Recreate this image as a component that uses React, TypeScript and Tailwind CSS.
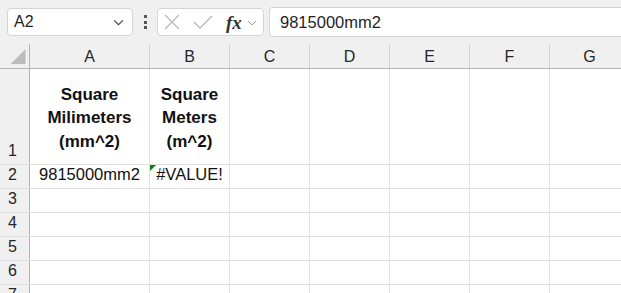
import React from 'react'

const cols = [
  { key: 'A', w: 'w-[120px]' },
  { key: 'B', w: 'w-[80px]' },
  { key: 'C', w: 'w-[80px]' },
  { key: 'D', w: 'w-[80px]' },
  { key: 'E', w: 'w-[80px]' },
  { key: 'F', w: 'w-[80px]' },
  { key: 'G', w: 'w-[80px]' },
]

const Chevron = ({ className }: { className?: string }) => (
  <svg viewBox="0 0 12 8" className={className} fill="none" stroke="currentColor" strokeWidth="1.3">
    <path d="M1 1.5 L6 6.5 L11 1.5" />
  </svg>
)

const Toolbar = () => (
  <div className="flex h-[44px] items-start pt-[7px]">
    <div className="ml-[7px] mt-[1px] flex h-[28px] w-[126px] items-center justify-between rounded-[4px] border border-[#d4d4d4] bg-white pl-[6px] pr-[8px]">
      <span className="text-[16px] text-[#1f1f1f]">A2</span>
      <Chevron className="h-[7px] w-[11px] text-[#444]" />
    </div>
    <div className="ml-[11px] mt-[8px] flex flex-col gap-[2.5px]">
      <div className="h-[3px] w-[3px] bg-[#555]" />
      <div className="h-[3px] w-[3px] bg-[#555]" />
      <div className="h-[3px] w-[3px] bg-[#555]" />
    </div>
    <div className="ml-[10px] mt-[1px] flex h-[28px] w-[107px] items-center rounded-[4px] border border-[#d4d4d4] bg-white pl-[6px]">
      <svg viewBox="0 0 16 16" className="h-[16px] w-[16px] text-[#b9b9b9]" fill="none" stroke="currentColor" strokeWidth="1.3">
        <path d="M1 1 L15 15 M15 1 L1 15" />
      </svg>
      <svg viewBox="0 0 20 16" className="ml-[13px] h-[16px] w-[20px] text-[#b9b9b9]" fill="none" stroke="currentColor" strokeWidth="1.3">
        <path d="M1 8 L7 14 L19 2" />
      </svg>
      <span className="ml-[13px] font-['Liberation_Serif',serif] text-[19px] italic font-bold leading-none text-[#333]">fx</span>
      <Chevron className="ml-[5px] mt-[2px] h-[6px] w-[10px] text-[#888]" />
    </div>
    <div className="ml-[5px] flex h-[30px] flex-1 items-center rounded-l-[4px] border border-r-0 border-[#d4d4d4] bg-white pl-[10px]">
      <span className="text-[16.5px] text-[#1f1f1f]">9815000mm2</span>
    </div>
  </div>
)

const HeaderRow = () => (
  <div className="flex h-[25px] border-b border-[#b4b4b4]">
    <div className="relative w-[30px] shrink-0 border-r border-[#b4b4b4]">
      <svg viewBox="0 0 16 16" className="absolute left-[10px] top-[5px] h-[15px] w-[16px]">
        <path d="M16 0 L16 16 L0 16 Z" fill="#bcbcbc" />
      </svg>
    </div>
    {cols.map((c) => (
      <div
        key={c.key}
        className={`${c.w} flex shrink-0 items-center justify-center border-r border-[#d0d0d0] pt-[1px] text-[16px] text-[#262626]`}
      >
        {c.key}
      </div>
    ))}
  </div>
)

const Row = ({
  num,
  h,
  children,
}: {
  num: number
  h: string
  children?: React.ReactNode[]
}) => (
  <div className={`flex ${h} shrink-0 border-b border-[#e1e1e1]`}>
    <div className="flex w-[30px] shrink-0 items-end border-r border-[#b4b4b4] bg-[#f0f0f0] pb-[1px] pl-[8px] text-[16px] text-[#262626]">
      {num}
    </div>
    {cols.map((c, i) => (
      <div key={c.key} className={`${c.w} relative shrink-0 border-r border-[#e1e1e1] bg-white`}>
        {children?.[i]}
      </div>
    ))}
  </div>
)

export default function App() {
  return (
    <div className="h-[293px] w-[621px] overflow-hidden bg-[#f0f0f0] font-['Liberation_Sans',Arial,sans-serif]">
      <Toolbar />
      <HeaderRow />
      <Row
        num={1}
        h="h-[96px]"
        children={[
          <div key="a" className="flex h-full flex-col items-center justify-end pb-[11px] text-[17px] font-bold leading-[23.5px] text-[#111]">
            <span>Square</span>
            <span>Milimeters</span>
            <span>(mm^2)</span>
          </div>,
          <div key="b" className="flex h-full flex-col items-center justify-end pb-[11px] text-[17px] font-bold leading-[23.5px] text-[#111]">
            <span>Square</span>
            <span>Meters</span>
            <span>(m^2)</span>
          </div>,
        ]}
      />
      <Row
        num={2}
        h="h-[24px]"
        children={[
          <div key="a" className="flex h-full items-end justify-center pb-[1px] text-[16.5px] text-[#111]">
            9815000mm2
          </div>,
          <div key="b" className="flex h-full items-end justify-center pb-[1px] text-[16.5px] text-[#111]">
            <div className="absolute left-0 top-0 h-0 w-0 border-r-[6px] border-t-[6px] border-r-transparent border-t-[#107c10]" />
            #VALUE!
          </div>,
        ]}
      />
      <Row num={3} h="h-[24px]" />
      <Row num={4} h="h-[24px]" />
      <Row num={5} h="h-[24px]" />
      <Row num={6} h="h-[24px]" />
      <Row num={7} h="h-[24px]" />
    </div>
  )
}
